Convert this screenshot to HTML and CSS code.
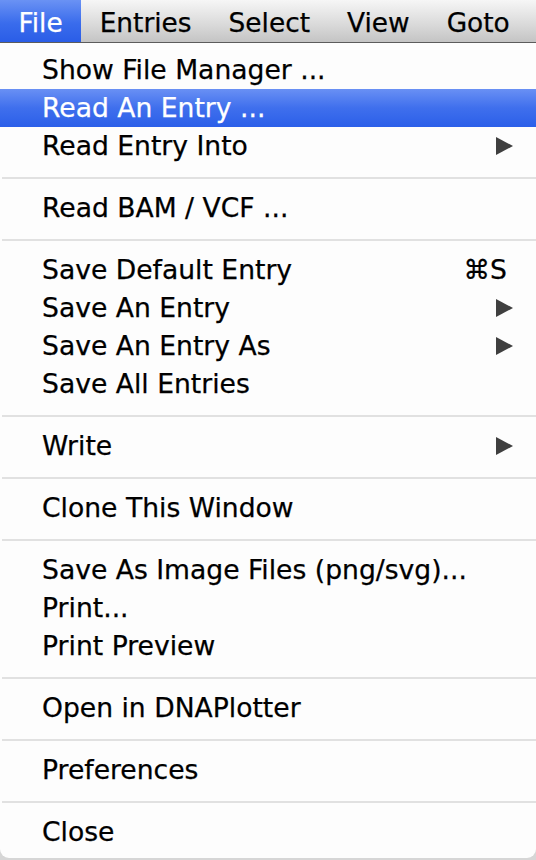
FILE: index.html
```html
<!DOCTYPE html>
<html>
<head>
<meta charset="utf-8">
<link rel="stylesheet" href="styles.css">
</head>
<body>
<div class="menubar">
  <div class="mb-item active">File</div>
  <div class="mb-item">Entries</div>
  <div class="mb-item">Select</div>
  <div class="mb-item">View</div>
  <div class="mb-item">Goto</div>
</div>
<div class="menu">
  <div class="item">Show File Manager ...</div>
  <div class="item selected">Read An Entry ...</div>
  <div class="item">Read Entry Into<svg class="arrow" viewBox="0 0 17 18"><polygon points="0,0 17,9 0,18"/></svg></div>
  <div class="sep"></div>
  <div class="item">Read BAM / VCF ...</div>
  <div class="sep"></div>
  <div class="item">Save Default Entry<span class="shortcut">⌘S</span></div>
  <div class="item">Save An Entry<svg class="arrow" viewBox="0 0 17 18"><polygon points="0,0 17,9 0,18"/></svg></div>
  <div class="item">Save An Entry As<svg class="arrow" viewBox="0 0 17 18"><polygon points="0,0 17,9 0,18"/></svg></div>
  <div class="item">Save All Entries</div>
  <div class="sep"></div>
  <div class="item">Write<svg class="arrow" viewBox="0 0 17 18"><polygon points="0,0 17,9 0,18"/></svg></div>
  <div class="sep"></div>
  <div class="item">Clone This Window</div>
  <div class="sep"></div>
  <div class="item">Save As Image Files (png/svg)...</div>
  <div class="item">Print...</div>
  <div class="item">Print Preview</div>
  <div class="sep"></div>
  <div class="item">Open in DNAPlotter</div>
  <div class="sep"></div>
  <div class="item">Preferences</div>
  <div class="sep"></div>
  <div class="item">Close</div>
</div>
</body>
</html>
```

FILE: styles.css
```css
html, body {
  margin: 0;
  padding: 0;
}
body {
  width: 536px;
  height: 860px;
  background: #d6d6d6;
  font-family: "DejaVu Sans", "Liberation Sans", sans-serif;
  font-size: 26px;
  color: #000;
  overflow: hidden;
  -webkit-text-stroke: 0.25px currentColor;
}
.menubar {
  display: flex;
  height: 42px;
  border-bottom: 1px solid #5c5c5c;
  background: linear-gradient(#f6f6f6, #d9d9d9 60%, #c4c4c4);
}
.mb-item {
  display: flex;
  align-items: center;
  box-sizing: border-box;
  padding: 2px 18.5px 0;
  height: 42px;
  font-size: 26.4px;
}
.mb-item.active {
  color: #fff;
  background: linear-gradient(#6a92f4, #3a6cec 55%, #2a5de7);
}
.menu {
  background: #fdfdfd;
  padding: 8px 0 7px;
  border-radius: 0 0 9px 9px;
  font-size: 26.6px;
}
.item {
  display: flex;
  align-items: center;
  justify-content: space-between;
  box-sizing: border-box;
  height: 38px;
  padding: 0 23px 2px 42px;
  white-space: nowrap;
}
.item.selected {
  color: #fff;
  background: linear-gradient(#6990f4, #3f6fed 50%, #2b5fe9);
}
.arrow {
  width: 17px;
  height: 18px;
  fill: #3f3f3f;
  margin-top: 2px;
}
.shortcut {
  margin-right: 6px;
}
.sep {
  height: 24px;
  box-sizing: border-box;
  padding-top: 12px;
  margin-left: 2px;
}
.sep::before {
  content: "";
  display: block;
  height: 2px;
  background: #e1e1e1;
}
```
